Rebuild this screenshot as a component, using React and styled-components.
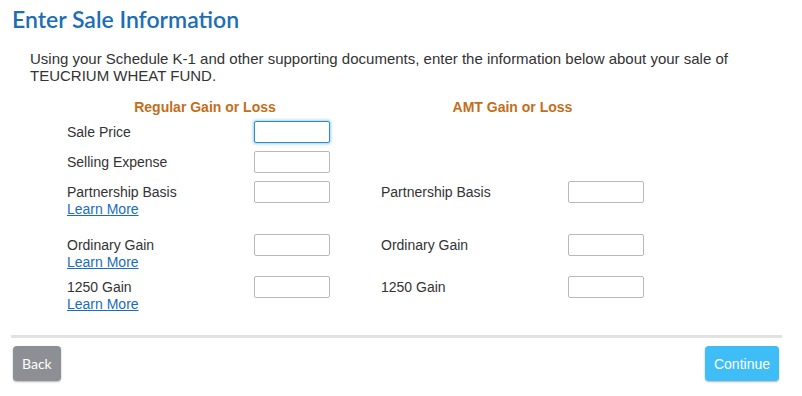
import React from 'react';
import styled, { createGlobalStyle } from 'styled-components';

const GlobalStyle = createGlobalStyle`
  body {
    margin: 0;
    background: #fff;
    font-family: 'Liberation Sans', Arial, sans-serif;
    color: #333;
  }
`;

const Page = styled.div`
  width: 802px;
  height: 396px;
  padding: 5px 20px 0 11px;
  box-sizing: border-box;
`;

const Title = styled.h1`
  margin: 0 0 0 1px;
  font-family: Lato, 'Open Sans', sans-serif;
  font-weight: 600;
  font-size: 23px;
  line-height: 28px;
  color: #1c6fb4;
`;

const Intro = styled.p`
  margin: 17px 0 0 19px;
  max-width: 712px;
  font-size: 15px;
  line-height: 17px;
  color: #333;
`;

const Grid = styled.div`
  display: grid;
  grid-template-columns: 187px 76px 51px 187px 76px;
  margin: 15px 0 0 56px;
`;

const Heading = styled.div`
  grid-column: ${({ $col }) => $col};
  padding-left: ${({ $shift }) => $shift || 0}px;
  text-align: center;
  font-weight: bold;
  font-size: 14px;
  line-height: 17px;
  color: #c46e1b;
  margin-bottom: 5px;
`;

const Cell = styled.div`
  height: ${({ $h }) => ($h ? `${$h}px` : 'auto')};
`;

const Label = styled.div`
  padding-top: 3px;
  font-size: 14px;
  line-height: 17px;
  color: #333;
`;

const Link = styled.a`
  display: block;
  color: #1a6dbb;
  text-decoration: underline;
  font-size: 14px;
  line-height: 17px;
  cursor: pointer;
`;

const Input = styled.input`
  display: block;
  width: 76px;
  height: 22px;
  box-sizing: border-box;
  margin: 0;
  padding: 2px 4px;
  border: 1px solid ${({ $focus }) => ($focus ? '#2f8dc9' : '#b9b9b9')};
  border-radius: 2px;
  box-shadow: ${({ $focus }) =>
    $focus ? '0 0 3px 1px rgba(80, 170, 230, 0.55)' : 'none'};
  font-size: 14px;
  outline: none;
`;

const Divider = styled.hr`
  margin: 22px 0 0 0;
  border: none;
  height: 3px;
  background: #e2e2e2;
`;

const Footer = styled.div`
  display: flex;
  justify-content: space-between;
  align-items: flex-start;
  padding: 8px 3px 0 2px;
`;

const Button = styled.button`
  height: 35px;
  padding: 0 ${({ $pad }) => $pad}px;
  border: none;
  border-radius: 4px;
  color: #fff;
  font-family: ${({ $primary }) =>
    $primary ? "'Liberation Sans', Arial, sans-serif" : 'Lato, sans-serif'};
  font-size: 14px;
  background: ${({ $primary }) => ($primary ? '#3ebdf6' : '#8e8f94')};
  box-shadow: 0 1px 2px rgba(0, 0, 0, 0.3);
  cursor: pointer;
`;

const rows = [
  { label: 'Sale Price', focus: true, h: 30 },
  { label: 'Selling Expense', h: 30 },
  { label: 'Partnership Basis', link: true, amt: true, h: 53 },
  { label: 'Ordinary Gain', link: true, amt: true, h: 42 },
  { label: '1250 Gain', link: true, amt: true },
];

const App = () => {
  return (
    <Page>
      <GlobalStyle />
      <Title>Enter Sale Information</Title>
      <Intro>
        Using your Schedule K-1 and other supporting documents, enter the
        information below about your sale of TEUCRIUM WHEAT FUND.
      </Intro>
      <Grid>
        <Heading $col="1 / 3" $shift={13}>Regular Gain or Loss</Heading>
        <Heading $col="4 / 6">AMT Gain or Loss</Heading>
        {rows.map((r) => (
          <React.Fragment key={r.label}>
            <Cell $h={r.h}>
              <Label>{r.label}</Label>
              {r.link && <Link>Learn More</Link>}
            </Cell>
            <Cell $h={r.h}>
              <Input $focus={r.focus} />
            </Cell>
            <Cell $h={r.h} />
            <Cell $h={r.h}>{r.amt && <Label>{r.label}</Label>}</Cell>
            <Cell $h={r.h}>{r.amt && <Input />}</Cell>
          </React.Fragment>
        ))}
      </Grid>
      <Divider />
      <Footer>
        <Button $pad={9}>Back</Button>
        <Button $primary $pad={9}>Continue</Button>
      </Footer>
    </Page>
  );
};

export default App;
